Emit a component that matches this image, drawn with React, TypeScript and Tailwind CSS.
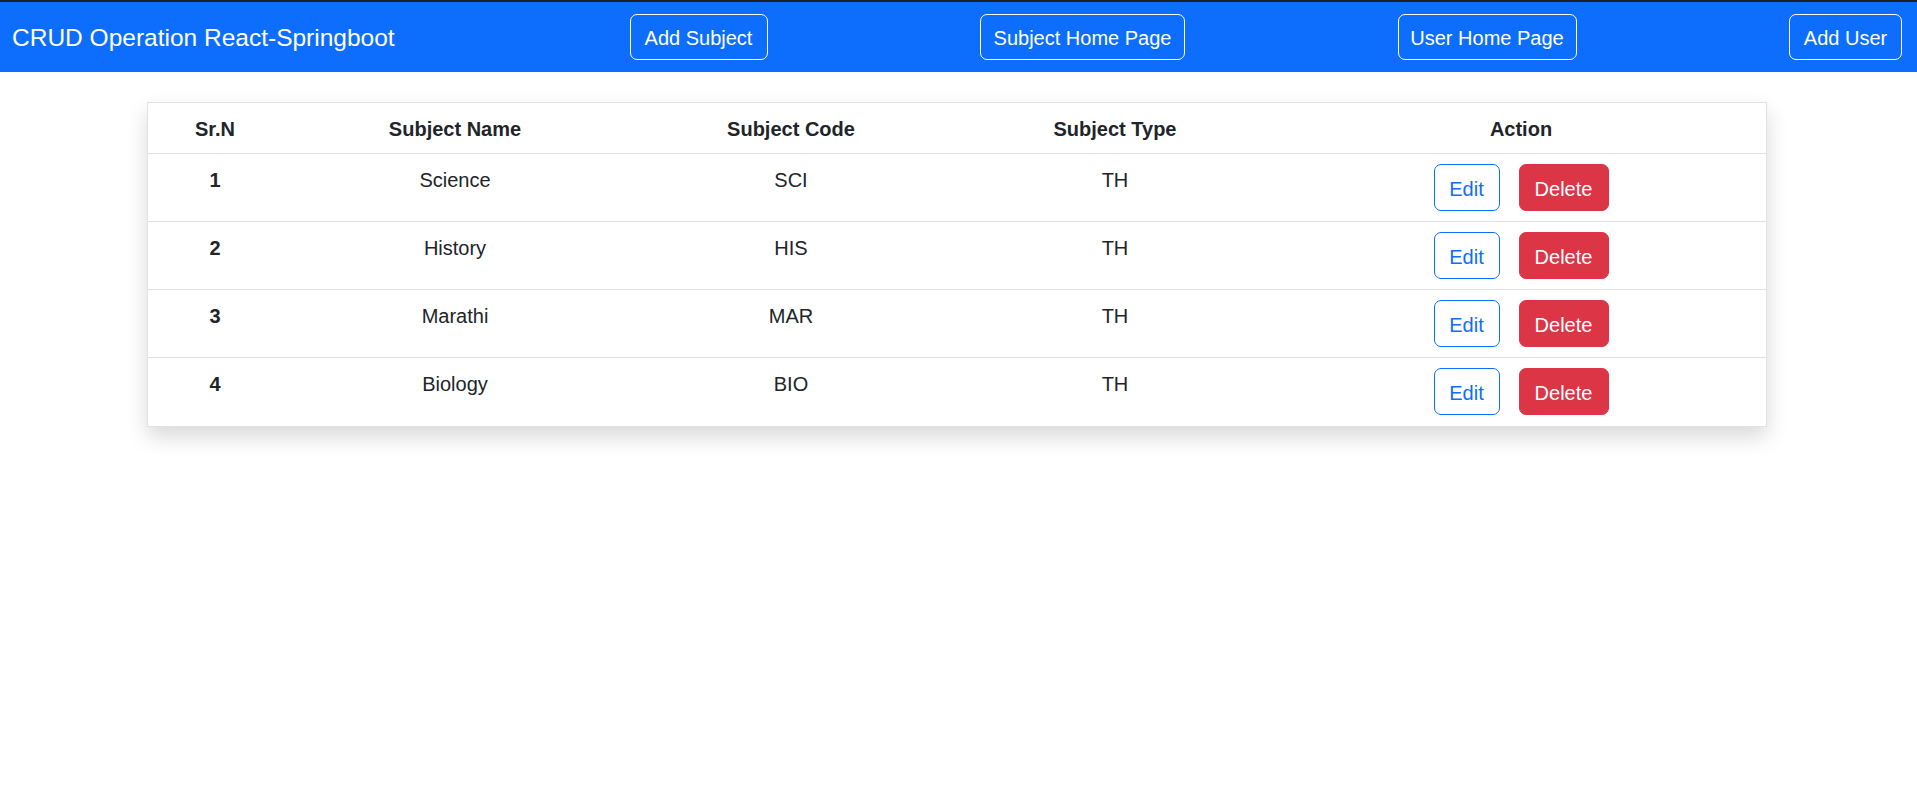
import React from "react";

const subjects = [
  { id: 1, name: "Science", code: "SCI", type: "TH" },
  { id: 2, name: "History", code: "HIS", type: "TH" },
  { id: 3, name: "Marathi", code: "MAR", type: "TH" },
  { id: 4, name: "Biology", code: "BIO", type: "TH" },
];

/* column widths follow the reference table */
const cols = "grid grid-cols-[134px_346px_326px_322px_1fr]";

function NavButton({ label, width }: { label: string; width: string }) {
  return (
    <button
      className={`h-[46px] ${width} rounded-[7px] border border-white pt-[2px] text-[20px] leading-[30px] text-white`}
    >
      {label}
    </button>
  );
}

export default function App() {
  return (
    <div
      className="min-h-[793px] bg-white text-[#212529]"
      style={{ fontFamily: '"Liberation Sans", Arial, sans-serif' }}
    >
      {/* top nav */}
      <nav className="flex h-[72px] items-center justify-between border-t-2 border-[#1f1f1f] bg-[#0d6efd] pl-[12px] pr-[15px]">
        <span className="mr-[20px] w-[385px] whitespace-nowrap pt-[2px] text-[24.5px] text-white">
          CRUD Operation React-Springboot
        </span>
        <NavButton label="Add Subject" width="w-[138px]" />
        <NavButton label="Subject Home Page" width="w-[205px]" />
        <NavButton label="User Home Page" width="w-[179px]" />
        <NavButton label="Add User" width="w-[113px]" />
      </nav>

      <div className="ml-[147px] w-[1620px] pt-[30px]">
        <div className="border border-[#dee2e6] bg-white shadow-[0_10px_20px_rgba(0,0,0,0.15)]">
          <div className={`${cols} h-[51px] border-b border-[#dee2e6] text-center text-[20px] font-bold leading-[30px]`}>
            <div className="pt-[11px]">Sr.N</div>
            <div className="pt-[11px]">Subject Name</div>
            <div className="pt-[11px]">Subject Code</div>
            <div className="pt-[11px]">Subject Type</div>
            <div className="pt-[11px]">Action</div>
          </div>

          {subjects.map((s, i) => (
            <div
              key={s.id}
              className={`${cols} h-[68px] text-center text-[20px] leading-[30px] ${
                i < subjects.length - 1 ? "border-b border-[#dee2e6]" : ""
              }`}
            >
              <div className="pt-[11px] font-bold">{s.id}</div>
              <div className="pt-[11px]">{s.name}</div>
              <div className="pt-[11px]">{s.code}</div>
              <div className="pt-[11px]">{s.type}</div>
              <div className="flex justify-center gap-[19px] py-[10px]">
                <button className="h-[47px] w-[66px] rounded-[7px] border border-[#0d6efd] pt-[2px] text-[20px] text-[#0d6efd]">
                  Edit
                </button>
                <button className="h-[47px] w-[90px] rounded-[7px] border border-[#dc3545] bg-[#dc3545] pt-[2px] text-[20px] text-white">
                  Delete
                </button>
              </div>
            </div>
          ))}
        </div>
      </div>
    </div>
  );
}
